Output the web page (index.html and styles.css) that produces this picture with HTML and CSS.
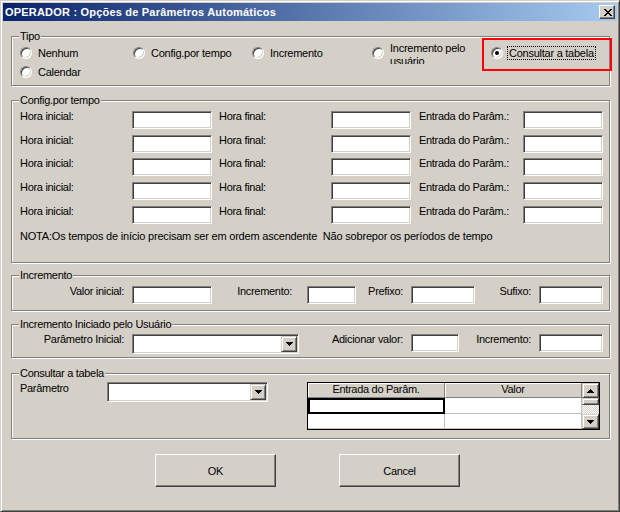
FILE: index.html
```html
<html>
<head>
<meta charset="utf-8">
<link rel="stylesheet" href="styles.css">
<title>OPERADOR : Opções de Parâmetros Automáticos</title>
</head>
<body>
<div class="window">
  <div class="titlebar">
    <span class="title">OPERADOR : Opções de Parâmetros Automáticos</span>
    <span class="caption-btn">
      <svg width="8" height="7" viewBox="0 0 8 7"><path d="M0 0h2v1H0z M6 0h2v1H6z M1 1h2v1H1z M5 1h2v1H5z M2 2h4v1H2z M3 3h2v1H3z M2 4h4v1H2z M1 5h2v1H1z M5 5h2v1H5z M0 6h2v1H0z M6 6h2v1H6z" fill="#000"/></svg>
    </span>
  </div>

  <div class="dialog">
    <!-- tipo -->
    <fieldset class="group group-tipo">
      <legend>Tipo</legend>
      <div class="tipo-grid">
        <label class="option"><span class="radio"></span>Nenhum</label>
        <label class="option"><span class="radio"></span>Config.por tempo</label>
        <label class="option"><span class="radio"></span>Incremento</label>
        <label class="option"><span class="radio"></span><span class="wrap-label">Incremento pelo usuário</span></label>
        <label class="option option-marked"><span class="radio radio-checked"></span><span class="focus-text">Consultar a tabela</span></label>
        <label class="option"><span class="radio"></span>Calendar</label>
      </div>
    </fieldset>

    <!-- config por tempo -->
    <fieldset class="group group-config">
      <legend>Config.por tempo</legend>
      <div class="time-grid">
        <span class="field-label">Hora inicial:</span><span class="textbox"></span>
        <span class="field-label">Hora final:</span><span class="textbox"></span>
        <span class="field-label">Entrada do Parâm.:</span><span class="textbox"></span>

        <span class="field-label">Hora inicial:</span><span class="textbox"></span>
        <span class="field-label">Hora final:</span><span class="textbox"></span>
        <span class="field-label">Entrada do Parâm.:</span><span class="textbox"></span>

        <span class="field-label">Hora inicial:</span><span class="textbox"></span>
        <span class="field-label">Hora final:</span><span class="textbox"></span>
        <span class="field-label">Entrada do Parâm.:</span><span class="textbox"></span>

        <span class="field-label">Hora inicial:</span><span class="textbox"></span>
        <span class="field-label">Hora final:</span><span class="textbox"></span>
        <span class="field-label">Entrada do Parâm.:</span><span class="textbox"></span>

        <span class="field-label">Hora inicial:</span><span class="textbox"></span>
        <span class="field-label">Hora final:</span><span class="textbox"></span>
        <span class="field-label">Entrada do Parâm.:</span><span class="textbox"></span>
      </div>
      <p class="note">NOTA:Os tempos de início precisam ser em ordem ascendente&nbsp; Não sobrepor os períodos de tempo</p>
    </fieldset>

    <!-- incremento -->
    <fieldset class="group group-inc">
      <legend>Incremento</legend>
      <div class="inc-row">
        <span class="field-label label-right">Valor inicial:</span><span class="textbox"></span>
        <span class="field-label label-right label-gap-wide">Incremento:</span><span class="textbox textbox-small"></span>
        <span class="field-label label-right">Prefixo:</span><span class="textbox textbox-mid"></span>
        <span class="field-label label-right">Sufixo:</span><span class="textbox textbox-mid"></span>
      </div>
    </fieldset>

    <!-- incremento pelo usuario -->
    <fieldset class="group group-user">
      <legend>Incremento Iniciado pelo Usuário</legend>
      <div class="user-row">
        <span class="field-label label-right">Parâmetro Inicial:</span>
        <span class="combo combo-long">
          <span class="combo-btn"><svg width="7" height="4" viewBox="0 0 7 4"><path d="M0 0h7v1H0z M1 1h5v1H1z M2 2h3v1H2z M3 3h1v1H3z" fill="#000"/></svg></span>
        </span>
        <span class="field-label label-right">Adicionar valor:</span><span class="textbox textbox-short"></span>
        <span class="field-label label-right">Incremento:</span><span class="textbox textbox-mid"></span>
      </div>
    </fieldset>

    <!-- consultar a tabela -->
    <fieldset class="group group-table">
      <legend>Consultar a tabela</legend>
      <div class="table-row">
        <span class="field-label param-label">Parâmetro</span>
        <span class="combo combo-param">
          <span class="combo-btn"><svg width="7" height="4" viewBox="0 0 7 4"><path d="M0 0h7v1H0z M1 1h5v1H1z M2 2h3v1H2z M3 3h1v1H3z" fill="#000"/></svg></span>
        </span>
        <div class="param-table">
          <div class="table-cells">
            <span class="table-head">Entrada do Parâm.</span>
            <span class="table-head">Valor</span>
            <span class="table-cell table-cell-active"></span>
            <span class="table-cell"></span>
            <span class="table-cell"></span>
            <span class="table-cell"></span>
          </div>
          <div class="scrollbar">
            <span class="scroll-btn"><svg width="7" height="4" viewBox="0 0 7 4"><path d="M3 0h1v1H3z M2 1h3v1H2z M1 2h5v1H1z M0 3h7v1H0z" fill="#000"/></svg></span>
            <span class="scroll-thumb"></span>
            <span class="scroll-track"></span>
            <span class="scroll-btn"><svg width="7" height="4" viewBox="0 0 7 4"><path d="M0 0h7v1H0z M1 1h5v1H1z M2 2h3v1H2z M3 3h1v1H3z" fill="#000"/></svg></span>
          </div>
        </div>
      </div>
    </fieldset>

    <div class="buttons">
      <button class="btn">OK</button>
      <button class="btn">Cancel</button>
    </div>
  </div>
</div>
</body>
</html>
```

FILE: styles.css
```css
/* dialog frame */
* {box-sizing: border-box;}

body {
  margin: 0;
  font-family: "Liberation Sans", Arial, Helvetica, sans-serif;
  font-size: 11px;
  letter-spacing: -0.3px;
  color: #000;
}

.window {
  width: 620px;
  height: 512px;
  padding: 2px;
  background-color: #D4D0C8;
  border: 1px solid;
  border-color: #D4D0C8 #404040 #404040 #D4D0C8;
  box-shadow: inset 1px 1px #fff, inset -1px -1px #808080;
}

.titlebar {
  height: 18px;
  padding: 0 2px;
  display: flex;
  align-items: center;
  justify-content: space-between;
  background: linear-gradient(to right, #0A246A, #A6CAF0);
}

.title {
  color: #fff;
  font-weight: bold;
  letter-spacing: 0.2px;
  line-height: 18px;
  white-space: nowrap;
}

.caption-btn {
  width: 16px;
  height: 14px;
  padding: 3px 0 0 4px;
  display: flex;
  align-items: flex-start;
  background-color: #D4D0C8;
  border: 1px solid;
  border-color: #fff #404040 #404040 #fff;
  box-shadow: inset -1px -1px #808080;
}

.caption-btn svg, .combo-btn svg, .scroll-btn svg {display: block;}

.dialog {
  padding: 10px 0 0 8px;
}

/* group boxes */
.group {
  width: 599px;
  min-width: 0;
  margin: 0;
  padding: 0;
  border: 1px solid #808080;
  box-shadow: inset 1px 1px #fff, 1px 1px #fff;
}

.group legend {
  margin-left: 7px;
  padding: 0 1px;
  line-height: 11px;
  background-color: #D4D0C8;
  white-space: nowrap;
}

.group-tipo {height: 55px; padding-top: 4px;}
.group-config {height: 168px; margin-top: 9px; padding-top: 5px;}
.group-inc {height: 41px; margin-top: 7px; padding-top: 5px;}
.group-user {height: 39px; margin-top: 8px; padding-top: 4px;}
.group-table {height: 71px; margin-top: 10px; padding-top: 3px;}

/* tipo radios */
.tipo-grid {
  display: grid;
  grid-template-columns: 113px 119px 120px 119px 1fr;
  grid-auto-rows: 14px;
  row-gap: 5px;
  margin-left: 8px;
}

.option {
  position: relative;
  display: flex;
  align-items: center;
  gap: 6px;
  line-height: 13px;
  letter-spacing: -0.25px;
  white-space: nowrap;
}

.radio {
  position: relative;
  flex: none;
  width: 12px;
  height: 12px;
  border-radius: 50%;
  background-color: #fff;
  border: 1px solid;
  border-color: #808080 #fff #fff #808080;
  box-shadow: inset 1px 1px #404040, inset -1px -1px #D4D0C8;
}

.radio-checked::after {
  content: "";
  position: absolute;
  left: 3px;
  top: 3px;
  width: 4px;
  height: 4px;
  border-radius: 50%;
  background-color: #000;
}

.wrap-label {
  display: block;
  width: 82px;
  height: 22px;
  margin: -4px 0;
  overflow: hidden;
  white-space: normal;
}

.focus-text {
  margin-left: -2px;
  padding: 0 1px;
  line-height: 12px;
  border: 1px dotted #000;
}

.option-marked::after {
  content: "";
  position: absolute;
  left: -9px;
  top: -8px;
  width: 126px;
  height: 29px;
  border: 2px solid #f00;
}

/* fields */
.field-label {
  align-self: start;
  margin-top: -1px;
  line-height: 13px;
  white-space: nowrap;
}

.label-right {text-align: right; padding-right: 8px;}
.label-gap-wide {padding-right: 15px;}

.textbox {
  display: block;
  width: 80px;
  height: 18px;
  background-color: #fff;
  border: 1px solid;
  border-color: #808080 #fff #fff #808080;
  box-shadow: inset 1px 1px #404040, inset -1px -1px #D4D0C8;
}

.textbox-small {width: 49px;}
.textbox-short {width: 48px;}
.textbox-mid {width: 64px;}

.time-grid {
  display: grid;
  grid-template-columns: 112px 87px 112px 88px 104px 80px;
  grid-auto-rows: 18px;
  row-gap: 5.67px;
  margin-left: 8px;
}

.note {
  margin: 6px 0 0 8px;
  line-height: 13px;
  letter-spacing: -0.2px;
  white-space: nowrap;
}

.inc-row {
  display: grid;
  grid-template-columns: 120px 80px 95px 49px 55px 65px 63px 64px;
  grid-template-rows: 18px;
}

.user-row {
  display: grid;
  grid-template-columns: 120px 167px 112px 48px 80px 64px;
  grid-template-rows: 20px;
}

/* combo boxes */
.combo {
  display: flex;
  justify-content: flex-end;
  height: 20px;
  padding: 1px;
  background-color: #fff;
  border: 1px solid;
  border-color: #808080 #fff #fff #808080;
  box-shadow: inset 1px 1px #404040, inset -1px -1px #D4D0C8;
}

.combo-param {width: 161px; flex: none;}

.combo-btn, .scroll-btn, .scroll-thumb {
  display: flex;
  align-items: center;
  justify-content: center;
  background-color: #D4D0C8;
  border: 1px solid;
  border-color: #D4D0C8 #404040 #404040 #D4D0C8;
  box-shadow: inset 1px 1px #fff, inset -1px -1px #808080;
}

.combo-btn {width: 16px; height: 16px;}

/* lookup table */
.table-row {display: flex; align-items: flex-start; margin-left: 8px;}

.param-label {width: 87px; flex: none; margin-top: 0;}

.param-table {
  display: flex;
  width: 293px;
  height: 48px;
  margin-left: 39px;
  background-color: #fff;
  border: 1px solid #000;
}

.table-cells {
  display: grid;
  grid-template-columns: 137px 137px;
  grid-template-rows: 15px 16px 15px;
}

.table-head {
  text-align: center;
  line-height: 13px;
  background-color: #D4D0C8;
  border-right: 1px solid #808080;
  border-bottom: 1px solid #808080;
  box-shadow: inset 1px 1px #fff;
}

.table-cell {
  border-right: 1px solid #C0C0C0;
  border-bottom: 1px solid #C0C0C0;
}

.table-cell-active {border: 2px solid #000;}

.scrollbar {
  display: flex;
  flex-direction: column;
  width: 17px;
}

.scroll-btn {height: 15px;}
.scroll-thumb {height: 7px;}

.scroll-track {
  flex: 1;
  background: repeating-conic-gradient(#fff 0 25%, #D4D0C8 0 50%) 0 0 / 2px 2px;
}

/* buttons */
.buttons {
  display: flex;
  gap: 63px;
  margin-top: 15px;
  padding-left: 144px;
}

.btn {
  width: 121px;
  height: 33px;
  padding: 0;
  font: inherit;
  letter-spacing: inherit;
  color: #000;
  background-color: #D4D0C8;
  border: 1px solid;
  border-color: #fff #404040 #404040 #fff;
  box-shadow: inset -1px -1px #808080;
}
```
